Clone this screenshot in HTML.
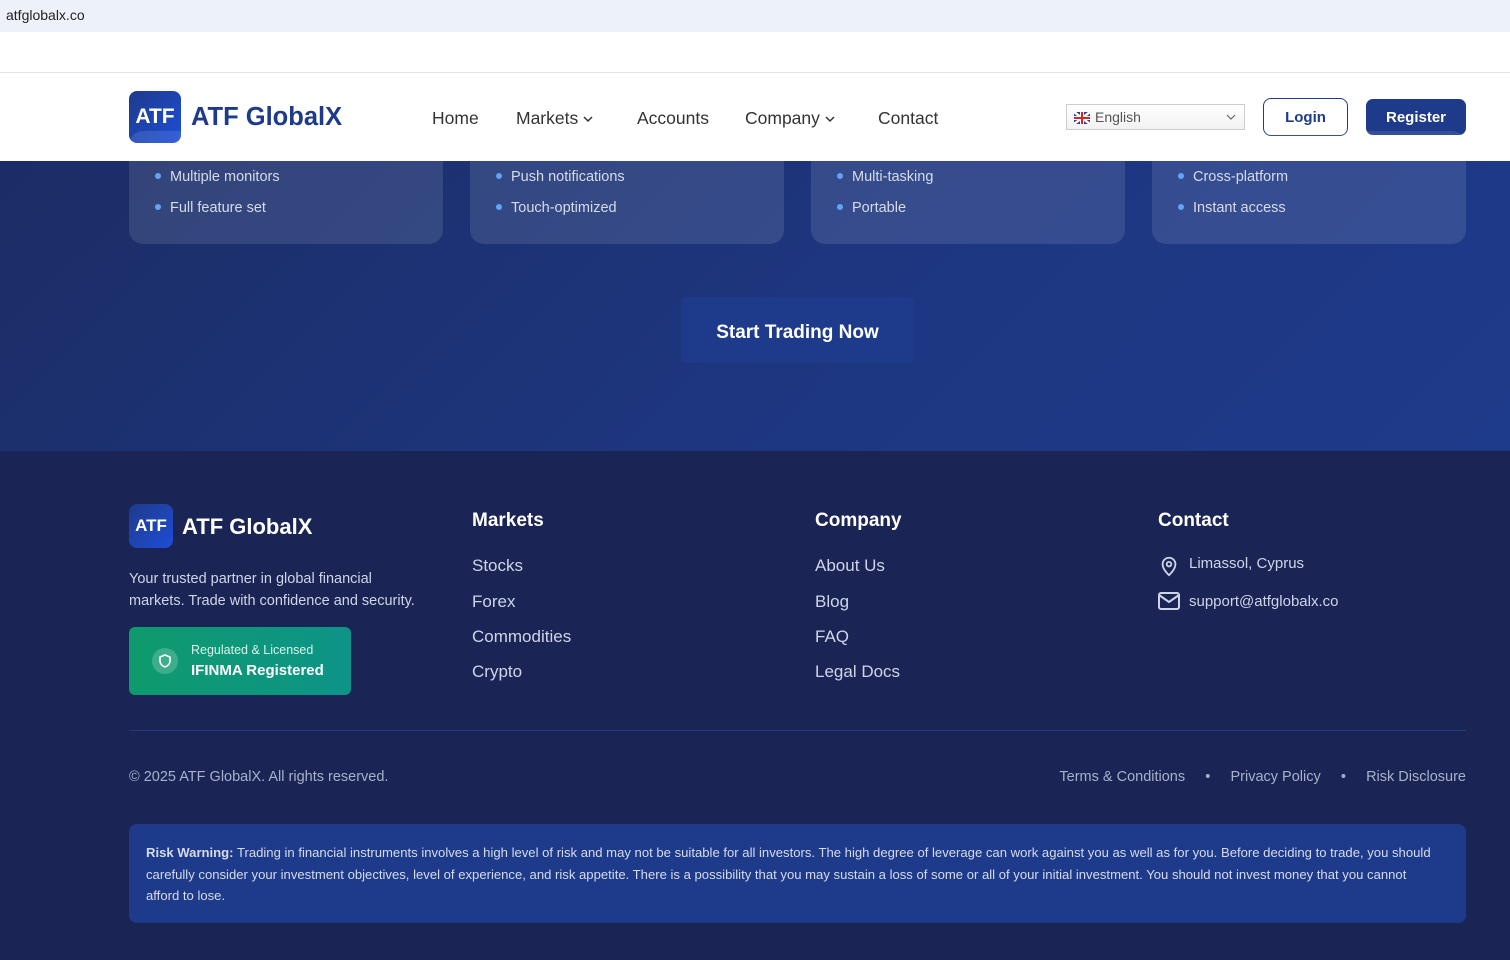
<!DOCTYPE html>
<html><head><meta charset="utf-8"><style>
*{margin:0;padding:0;box-sizing:border-box}
body{width:1510px;height:960px;overflow:hidden;font-family:"Liberation Sans",sans-serif;background:#1a2555;position:relative}
.abs{position:absolute}
.top{left:0;top:0;width:1510px;height:32px;background:#edf1f9;font-size:14px;color:#222;padding:7px 6px}
.white{left:0;top:32px;width:1510px;height:41px;background:#fff;border-bottom:1px solid #e3e3e3}
.nav{left:0;top:73px;width:1510px;height:88px;background:#fff}
.hero{left:0;top:161px;width:1510px;height:290px;background:linear-gradient(135deg,#1b2d66,#1e3782 60%,#1e3a8a)}
.card{top:130px;width:314px;height:113px;border-radius:14px;background:rgba(255,255,255,0.11)}
.li{font-size:14.5px;color:#d6dbe9}
.dot{width:6px;height:6px;border-radius:50%;background:#60a5fa}
.logo{border-radius:8px;background:linear-gradient(135deg,#1e3a8a,#1d4ed8);color:#fff;font-weight:bold;text-align:center}
.navl{font-size:17.5px;color:#333}
.fh{font-size:19px;font-weight:bold;color:#fff}
.fl{font-size:17px;color:#cfd5e6}
.chev{display:inline-block;vertical-align:middle;margin-left:4px}
</style></head><body>
<div class="abs top">atfglobalx.co</div>
<div class="abs white"></div>
<div class="abs nav">
 <div class="abs logo" style="left:129px;top:18px;width:52px;height:52px;font-size:21px;line-height:52px">ATF</div>
 <div class="abs" style="left:191px;top:30px;font-size:25.5px;font-weight:bold;color:#1e3a8a">ATF GlobalX</div>
 <div class="abs navl" style="left:432px;top:35px">Home</div>
 <div class="abs navl" style="left:516px;top:35px">Markets<svg class="chev" width="12" height="8" viewBox="0 0 12 8"><path d="M2 2l4 4 4-4" fill="none" stroke="#333" stroke-width="1.5"/></svg></div>
 <div class="abs navl" style="left:637px;top:35px">Accounts</div>
 <div class="abs navl" style="left:745px;top:35px">Company<svg class="chev" width="12" height="8" viewBox="0 0 12 8"><path d="M2 2l4 4 4-4" fill="none" stroke="#333" stroke-width="1.5"/></svg></div>
 <div class="abs navl" style="left:878px;top:35px">Contact</div>
 <div class="abs" style="left:1066px;top:31px;width:179px;height:26px;border:1px solid #ccc;background:linear-gradient(#fff,#f2f2f2);font-size:14px;color:#555;padding:4px 0 0 28px">English<svg class="abs" style="right:8px;top:9px" width="10" height="7" viewBox="0 0 10 7"><path d="M1 1l4 4 4-4" fill="none" stroke="#666" stroke-width="1.2"/></svg>
  <svg class="abs" style="left:7px;top:7px" width="16" height="12"><rect width="16" height="12" fill="#2b3f8f"/><path d="M0 0L16 12M16 0L0 12" stroke="#fff" stroke-width="2.5"/><path d="M8 0V12M0 6H16" stroke="#fff" stroke-width="4"/><path d="M8 0V12M0 6H16" stroke="#d22" stroke-width="2"/></svg></div>
 <div class="abs" style="left:1263px;top:25px;width:85px;height:38px;border:1.5px solid #1e3a8a;border-radius:8px;color:#1e3a8a;font-weight:bold;font-size:15px;text-align:center;line-height:38px">Login</div>
 <div class="abs" style="left:1366px;top:26px;width:100px;height:36px;background:#1e3a8a;border-radius:7px;color:#fff;font-weight:bold;font-size:15px;text-align:center;line-height:38px">Register</div>
</div>
<div class="abs hero">
 <div class="abs card" style="left:129px;top:-30px"></div>
 <div class="abs card" style="left:470px;top:-30px"></div>
 <div class="abs card" style="left:811px;top:-30px"></div>
 <div class="abs card" style="left:1152px;top:-30px"></div>
 <div class="abs dot" style="left:155px;top:12px"></div><div class="abs li" style="left:170px;top:8px">Multiple monitors</div>
 <div class="abs dot" style="left:155px;top:43px"></div><div class="abs li" style="left:170px;top:39px">Full feature set</div>
 <div class="abs dot" style="left:496px;top:12px"></div><div class="abs li" style="left:511px;top:8px">Push notifications</div>
 <div class="abs dot" style="left:496px;top:43px"></div><div class="abs li" style="left:511px;top:39px">Touch-optimized</div>
 <div class="abs dot" style="left:837px;top:12px"></div><div class="abs li" style="left:852px;top:8px">Multi-tasking</div>
 <div class="abs dot" style="left:837px;top:43px"></div><div class="abs li" style="left:852px;top:39px">Portable</div>
 <div class="abs dot" style="left:1178px;top:12px"></div><div class="abs li" style="left:1193px;top:8px">Cross-platform</div>
 <div class="abs dot" style="left:1178px;top:43px"></div><div class="abs li" style="left:1193px;top:39px">Instant access</div>
 <div class="abs" style="left:681px;top:136px;width:233px;height:66px;background:#1e3a8a;border-radius:6px;color:#fff;font-weight:bold;font-size:19px;text-align:center;line-height:72px">Start Trading Now</div>
</div>
<div class="abs logo" style="left:129px;top:504px;width:44px;height:44px;font-size:17px;line-height:44px">ATF</div>
<div class="abs" style="left:182px;top:514px;font-size:22px;font-weight:bold;color:#fff">ATF GlobalX</div>
<div class="abs" style="left:129px;top:568px;font-size:14.5px;line-height:22px;color:#cfd5e6">Your trusted partner in global financial<br>markets. Trade with confidence and security.</div>
<div class="abs" style="left:129px;top:627px;width:222px;height:68px;border-radius:6px;background:linear-gradient(90deg,#0e9a6d,#0d9488)">
 <div class="abs" style="left:23px;top:21px;width:26px;height:26px;border-radius:50%;background:rgba(255,255,255,0.2)"><svg width="26" height="26" viewBox="0 0 26 26"><path d="M13 7l5 2v4c0 3-2.5 5-5 6c-2.5-1-5-3-5-6V9z" fill="none" stroke="#fff" stroke-width="1.6" stroke-linejoin="round"/></svg></div>
 <div class="abs" style="left:62px;top:16px;font-size:12.5px;color:#d8f5ea">Regulated &amp; Licensed</div>
 <div class="abs" style="left:62px;top:35px;font-size:15px;font-weight:bold;color:#fff">IFINMA Registered</div>
</div>
<div class="abs fh" style="left:472px;top:510px">Markets</div>
<div class="abs fl" style="left:472px;top:556px">Stocks</div>
<div class="abs fl" style="left:472px;top:592px">Forex</div>
<div class="abs fl" style="left:472px;top:627px">Commodities</div>
<div class="abs fl" style="left:472px;top:662px">Crypto</div>
<div class="abs fh" style="left:815px;top:510px">Company</div>
<div class="abs fl" style="left:815px;top:556px">About Us</div>
<div class="abs fl" style="left:815px;top:592px">Blog</div>
<div class="abs fl" style="left:815px;top:627px">FAQ</div>
<div class="abs fl" style="left:815px;top:662px">Legal Docs</div>
<div class="abs fh" style="left:1158px;top:510px">Contact</div>
<svg class="abs" style="left:1158px;top:555px" width="22" height="22" viewBox="0 0 24 24" fill="none" stroke="#cfd5e6" stroke-width="2"><path d="M12 22s-7-6-7-12a7 7 0 0 1 14 0c0 6-7 12-7 12z"/><circle cx="12" cy="10" r="2.5"/></svg>
<div class="abs" style="left:1189px;top:555px;font-size:15px;color:#cfd5e6">Limassol, Cyprus</div>
<svg class="abs" style="left:1158px;top:592px" width="22" height="18" viewBox="0 0 22 18" fill="none" stroke="#cfd5e6" stroke-width="2"><rect x="1" y="1" width="20" height="16" rx="2"/><path d="M1 3l10 7 10-7"/></svg>
<div class="abs" style="left:1189px;top:593px;font-size:15px;color:#cfd5e6">support@atfglobalx.co</div>
<div class="abs" style="left:129px;top:730px;width:1337px;height:1px;background:#1e3a8a"></div>
<div class="abs" style="left:129px;top:769px;font-size:14.5px;color:#a8b1c9">© 2025 ATF GlobalX. All rights reserved.</div>
<div class="abs" style="right:44px;top:769px;font-size:14.5px;color:#a8b1c9;white-space:pre">Terms &amp; Conditions     •     Privacy Policy     •     Risk Disclosure</div>
<div class="abs" style="left:129px;top:824px;width:1337px;height:99px;border-radius:8px;background:#1e3a8a;padding:18px 17px;font-size:13.1px;line-height:21.5px;color:#d6dbe9;white-space:nowrap">
<b>Risk Warning:</b> Trading in financial instruments involves a high level of risk and may not be suitable for all investors. The high degree of leverage can work against you as well as for you. Before deciding to trade, you should<br>carefully consider your investment objectives, level of experience, and risk appetite. There is a possibility that you may sustain a loss of some or all of your initial investment. You should not invest money that you cannot<br>afford to lose.</div>
</body></html>
